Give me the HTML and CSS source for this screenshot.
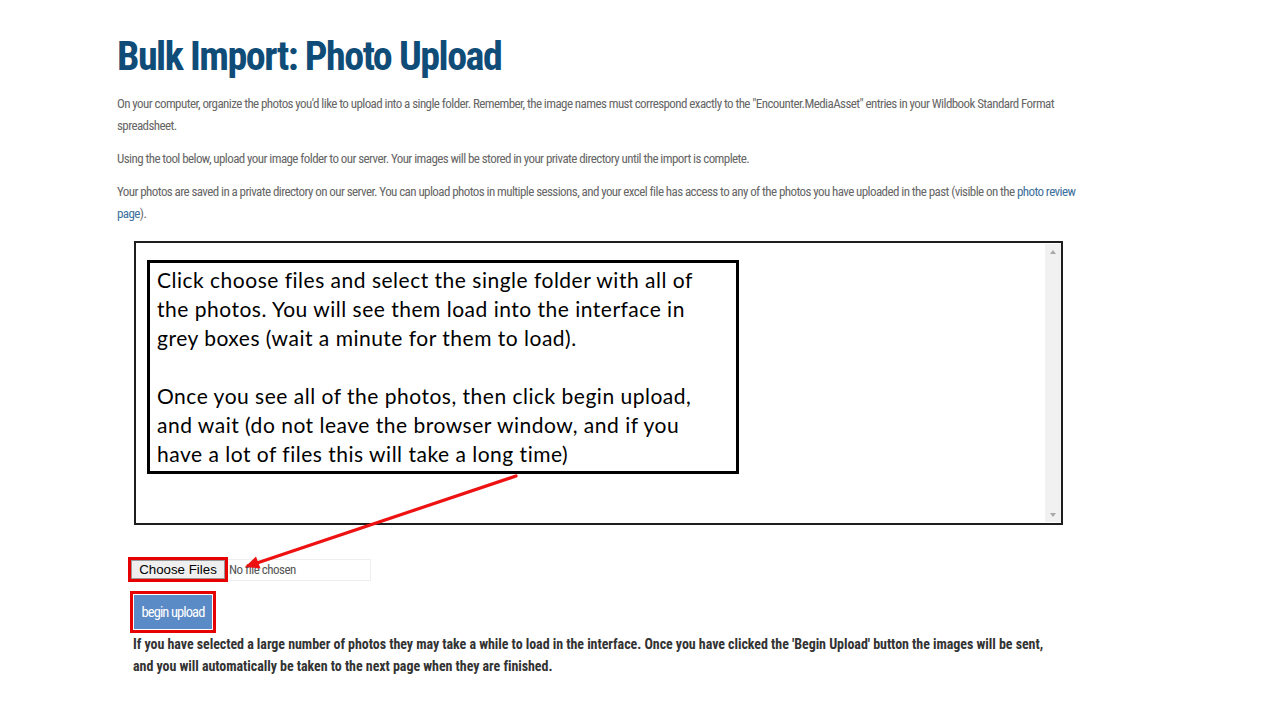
FILE: index.html
```html
<!DOCTYPE html>
<html lang="en">
<head>
<meta charset="utf-8">
<title>Bulk Import: Photo Upload</title>
<link rel="stylesheet" href="styles.css">
</head>
<body>
<main class="page">
  <h1 class="title">Bulk Import: Photo Upload</h1>
  <p class="intro">On your computer, organize the photos you'd like to upload into a single folder. Remember, the image names must correspond exactly to the "Encounter.MediaAsset" entries in your Wildbook Standard Format<br>spreadsheet.</p>
  <p class="intro">Using the tool below, upload your image folder to our server. Your images will be stored in your private directory until the import is complete.</p>
  <p class="intro">Your photos are saved in a private directory on our server. You can upload photos in multiple sessions, and your excel file has access to any of the photos you have uploaded in the past (visible on the <a class="link" href="#">photo review<br>page</a>).</p>

  <section class="upload-area">
    <div class="dropbox">
      <div class="callout">
        <p>Click choose files and select the single folder with all of<br>the photos. You will see them load into the interface in<br>grey boxes (wait a minute for them to load).</p>
        <p>Once you see all of the photos, then click begin upload,<br>and wait (do not leave the browser window, and if you<br>have a lot of files this will take a long time)</p>
      </div>
      <div class="scrollbar">
        <span class="arrow-up"></span>
        <span class="arrow-down"></span>
      </div>
    </div>

    <div class="file-row">
      <span class="hl"><button class="choose-btn" type="button">Choose Files</button></span>
      <span class="file-name">No file chosen</span>
    </div>
    <div class="begin-row">
      <span class="hl hl-begin"><button class="begin-btn" type="button">begin upload</button></span>
    </div>
    <p class="note">If you have selected a large number of photos they may take a while to load in the interface. Once you have clicked the 'Begin Upload' button the images will be sent,<br>and you will automatically be taken to the next page when they are finished.</p>
  </section>

  <svg class="pointer" width="290" height="105" viewBox="0 0 290 105" aria-hidden="true">
    <line x1="276" y1="6" x2="17" y2="93" stroke="#ee1111" stroke-width="3.2" stroke-linecap="round"/>
    <polygon points="5,97 20.5,98.5 16,86.5" fill="#ee1111"/>
  </svg>
</main>
</body>
</html>
```
FILE: styles.css
```css
* { box-sizing: border-box; }
html, body { margin: 0; padding: 0; background: #fff; }
body { width: 1280px; height: 720px; overflow: hidden; }

.page {
  position: relative;
  padding: 33px 0 0 117px;
  width: 1280px;
  height: 720px;
}

.title {
  margin: 0 0 12px 0;
  font-family: "Roboto Condensed", "Liberation Sans", sans-serif;
  font-weight: 700;
  font-size: 40px;
  line-height: 48px;
  letter-spacing: -1.5px;
  color: #0f4c77;
}

.intro {
  margin: 0 0 11px 0;
  font-family: "Roboto Condensed", "Liberation Sans", sans-serif;
  font-size: 13px;
  line-height: 22px;
  letter-spacing: -0.58px;
  color: #666;
  white-space: nowrap;
}
.link { color: #3d6f9b; text-decoration: none; }

.upload-area {
  padding-top: 5px;
}

.dropbox {
  position: relative;
  margin-left: 17px;
  width: 929px;
  height: 284px;
  border: 2px solid #1e1e1e;
  display: flex;
  justify-content: flex-end;
  padding: 1px 0 1px 0;
}
.scrollbar {
  width: 16px;
  background: #f1f1f1;
  display: flex;
  flex-direction: column;
  justify-content: space-between;
  align-items: center;
  padding: 6px 0 5px;
}
.arrow-up, .arrow-down {
  width: 0; height: 0;
  border-left: 3.5px solid transparent;
  border-right: 3.5px solid transparent;
}
.arrow-up { border-bottom: 4px solid #a8a8a8; }
.arrow-down { border-top: 4px solid #a8a8a8; }

.callout {
  position: absolute;
  left: 11px;
  top: 17px;
  width: 592px;
  height: 214px;
  border: 3px solid #000;
  background: #fff;
  padding: 2px 7px;
  font-family: "Lato", "Open Sans", sans-serif;
  font-size: 21px;
  line-height: 29px;
  letter-spacing: 0.5px;
  color: #000;
  white-space: nowrap;
}
.callout p { margin: 0 0 29px 0; }

.file-row {
  margin: 32px 0 0 11px;
  display: flex;
  align-items: center;
}
.hl { display: inline-flex; border: 3px solid #e60000; }
.choose-btn {
  width: 94px;
  height: 19px;
  padding: 0;
  font-family: "Liberation Sans", Arial, sans-serif;
  font-size: 13.3px;
  line-height: 17px;
  background: #efefef;
  border: 1px solid #999;
  color: #000;
}
.file-name {
  width: 143px;
  height: 22px;
  padding-left: 1px;
  border: 1px solid #eeeeee;
  border-left: 0;
  font-family: "Roboto Condensed", "Liberation Sans", sans-serif;
  font-size: 13px;
  letter-spacing: -0.5px;
  line-height: 20px;
  color: #555;
}

.begin-row { margin: 9px 0 0 13px; }
.hl-begin { padding: 1px; }
.begin-btn {
  width: 78px;
  height: 34px;
  padding: 0;
  background: #5b8bc6;
  color: #fff;
  border: 0;
  font-family: "Roboto Condensed", "Liberation Sans", sans-serif;
  font-size: 14.5px;
  letter-spacing: -0.9px;
}

.note {
  margin: 0 0 0 16px;
  font-family: "Roboto Condensed", "Liberation Sans", sans-serif;
  font-weight: 700;
  font-size: 14px;
  line-height: 22px;
  letter-spacing: -0.05px;
  color: #333;
  white-space: nowrap;
}

.pointer {
  position: absolute;
  left: 240px;
  top: 470px;
}
```
